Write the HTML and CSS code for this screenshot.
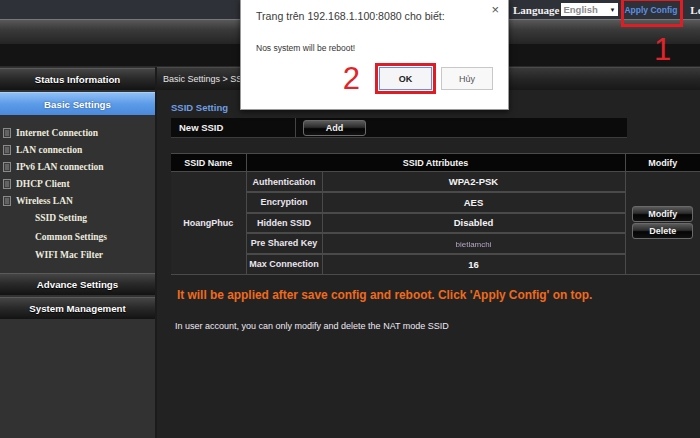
FILE: index.html
```html
<!DOCTYPE html>
<html>
<head>
<meta charset="utf-8">
<title>SSID Setting</title>
<link rel="stylesheet" href="styles.css">
</head>
<body>
<div class="page">
  <div class="topbar">
    <span class="lang-label">Language</span>
    <span class="lang-select"><span class="lang-value">English</span><span class="lang-arrow">▼</span></span>
    <a class="apply">Apply Config</a>
    <span class="logout">Logout</span>
  </div>
  <div class="banner">
    <div class="banner-top"></div>
    <div class="banner-bottom"></div>
  </div>
  <div class="main">
    <nav class="sidebar">
      <div class="nav-head first">Status Information</div>
      <div class="nav-head active">Basic Settings</div>
      <ul class="nav-list">
        <li class="nav-item"><svg class="doc" viewBox="0 0 8 10"><rect x="0.5" y="0.5" width="7" height="9" fill="#3c3c3c" stroke="#8a8a8a"/><path d="M2 3h4M2 5h4M2 7h4" stroke="#8a8a8a"/></svg>Internet Connection</li>
        <li class="nav-item"><svg class="doc" viewBox="0 0 8 10"><rect x="0.5" y="0.5" width="7" height="9" fill="#3c3c3c" stroke="#8a8a8a"/><path d="M2 3h4M2 5h4M2 7h4" stroke="#8a8a8a"/></svg>LAN connection</li>
        <li class="nav-item"><svg class="doc" viewBox="0 0 8 10"><rect x="0.5" y="0.5" width="7" height="9" fill="#3c3c3c" stroke="#8a8a8a"/><path d="M2 3h4M2 5h4M2 7h4" stroke="#8a8a8a"/></svg>IPv6 LAN connection</li>
        <li class="nav-item"><svg class="doc" viewBox="0 0 8 10"><rect x="0.5" y="0.5" width="7" height="9" fill="#3c3c3c" stroke="#8a8a8a"/><path d="M2 3h4M2 5h4M2 7h4" stroke="#8a8a8a"/></svg>DHCP Client</li>
        <li class="nav-item"><svg class="doc" viewBox="0 0 8 10"><rect x="0.5" y="0.5" width="7" height="9" fill="#3c3c3c" stroke="#8a8a8a"/><path d="M2 3h4M2 5h4M2 7h4" stroke="#8a8a8a"/></svg>Wireless LAN</li>
        <li class="nav-sub">SSID Setting</li>
        <li class="nav-sub">Common Settings</li>
        <li class="nav-sub">WIFI Mac Filter</li>
      </ul>
      <div class="nav-head">Advance Settings</div>
      <div class="nav-head">System Management</div>
    </nav>
    <section class="content">
      <div class="crumb">Basic Settings &gt; SSID Setting</div>
      <div class="panel">
        <h2 class="panel-title">SSID Setting</h2>
        <div class="new-row">
          <div class="new-label">New SSID</div>
          <div class="new-action"><button class="btn btn-add">Add</button></div>
        </div>
        <table class="ssid">
          <thead>
            <tr>
              <th class="c-name">SSID Name</th>
              <th colspan="2">SSID Attributes</th>
              <th class="c-mod">Modify</th>
            </tr>
          </thead>
          <tbody>
            <tr>
              <td class="c-name" rowspan="5">HoangPhuc</td>
              <td class="c-label">Authentication</td>
              <td class="c-val">WPA2-PSK</td>
              <td class="c-mod" rowspan="5">
                <div class="mod-btns">
                  <button class="btn">Modify</button>
                  <button class="btn">Delete</button>
                </div>
              </td>
            </tr>
            <tr><td class="c-label">Encryption</td><td class="c-val">AES</td></tr>
            <tr><td class="c-label">Hidden SSID</td><td class="c-val">Disabled</td></tr>
            <tr><td class="c-label">Pre Shared Key</td><td class="c-val"><span class="key">bietlamchi</span></td></tr>
            <tr><td class="c-label">Max Connection</td><td class="c-val">16</td></tr>
          </tbody>
        </table>
        <p class="warn">It will be applied after save config and reboot. Click 'Apply Config' on top.</p>
        <p class="note">In user account, you can only modify and delete the NAT mode SSID</p>
      </div>
    </section>
  </div>

  <div class="dialog">
    <div class="dlg-title">Trang trên 192.168.1.100:8080 cho biết:</div>
    <span class="dlg-close">×</span>
    <div class="dlg-msg">Nos system will be reboot!</div>
    <div class="dlg-actions">
      <span class="step step2">2</span>
      <span class="ok-frame"><button class="dlg-btn dlg-ok">OK</button></span>
      <button class="dlg-btn dlg-cancel">Hủy</button>
    </div>
  </div>

  <div class="apply-frame"></div>
  <span class="step step1">1</span>
</div>
</body>
</html>
```

FILE: styles.css
```css
* { box-sizing: border-box; }

html, body {
  margin: 0;
  padding: 0;
  background: #222222;
}

.page {
  position: relative;
  width: 700px;
  height: 438px;
  overflow: hidden;
  background: #222222;
  font-family: "Liberation Sans", Arial, sans-serif;
}

/* top bar */
.topbar {
  height: 19px;
  background: #2e3137;
  display: flex;
  align-items: center;
  padding-left: 513px;
  white-space: nowrap;
}
.topbar > * { flex: none; }
.lang-label {
  font-family: "Liberation Serif", "Times New Roman", serif;
  font-weight: bold;
  font-size: 11px;
  color: #f2f2f2;
}
.lang-select {
  margin-left: 2px;
  width: 57px;
  height: 13px;
  background: #ffffff;
  display: flex;
  align-items: center;
  justify-content: space-between;
  padding: 0 3px 0 2px;
  font-size: 9.5px;
  color: #8a8a8a;
  font-weight: bold;
}
.lang-arrow {
  font-size: 6px;
  color: #111;
}
.apply {
  margin-left: 6px;
  font-size: 8.5px;
  font-weight: bold;
  color: #5a8fe2;
}
.logout {
  margin-left: 13px;
  font-family: "Liberation Serif", "Times New Roman", serif;
  font-weight: bold;
  font-size: 11px;
  color: #f2f2f2;
}

/* banner */
.banner {
  height: 48px;
  display: flex;
  flex-direction: column;
}
.banner-top {
  height: 25px;
  border-top: 1px solid #777777;
  background: linear-gradient(#585858, #3a3a3a 40%, #242424);
}
.banner-bottom {
  flex: 1;
  background: #141414;
  border-bottom: 1px solid #2a2a2a;
}

/* main */
.main {
  display: flex;
  height: 371px;
}
.sidebar {
  width: 157px;
  background: #323232;
  border-right: 2px solid #1b1b1b;
  display: flex;
  flex-direction: column;
}
.nav-head {
  height: 22px;
  margin-top: 2px;
  display: flex;
  align-items: center;
  justify-content: center;
  font-size: 9.7px;
  font-weight: bold;
  color: #ffffff;
  border-top: 1px solid #5a5a5a;
  background: linear-gradient(#454545, #2a2a2a 45%, #131313);
  text-shadow: 0 1px 1px #000;
}
.nav-head.first { margin-top: 1px; }
.nav-head.active {
  height: 23px;
  border-top: 1px solid #a9d0fa;
  background: linear-gradient(#8ebff5, #5c9be8 50%, #4a89db);
  text-shadow: 0 0 2px #2a4f80;
}
.nav-list {
  list-style: none;
  margin: 0;
  padding: 9px 0 6px 0;
}
.nav-item, .nav-sub {
  font-family: "Liberation Serif", "Times New Roman", serif;
  font-weight: bold;
  font-size: 9.5px;
  color: #ecebdf;
  display: flex;
  align-items: center;
  white-space: nowrap;
}
.nav-item {
  height: 17px;
  padding-left: 3px;
}
.nav-sub {
  height: 18.5px;
  padding-left: 35px;
}
.doc {
  width: 8px;
  height: 10px;
  margin-right: 5px;
  flex: none;
}

/* content */
.content {
  flex: 1;
  display: flex;
  flex-direction: column;
}
.crumb {
  height: 23px;
  display: flex;
  align-items: center;
  padding-left: 6px;
  font-size: 9px;
  color: #e4e4e4;
  border-top: 1px solid #4a4a4a;
  background: linear-gradient(#393939, #252525 50%, #181818);
}
.panel {
  padding-left: 14px;
}
.panel-title {
  margin: 11px 0 0 0;
  height: 14px;
  line-height: 14px;
  font-size: 9.5px;
  font-weight: bold;
  color: #6f9ee4;
}
.new-row {
  margin-top: 3px;
  width: 456px;
  height: 20px;
  display: flex;
  background: #0b0b0b;
  border-bottom: 1px solid #3c3c3c;
}
.new-label {
  width: 125px;
  border-right: 1px solid #444;
  display: flex;
  align-items: center;
  padding-left: 8px;
  font-size: 9.5px;
  font-weight: bold;
  color: #f2f2f2;
}
.new-action {
  display: flex;
  align-items: center;
  padding-left: 7px;
}
.btn {
  font-family: "Liberation Sans", Arial, sans-serif;
  font-size: 9px;
  font-weight: bold;
  color: #f2f2f2;
  height: 16px;
  padding: 0;
  border: 1px solid #6a6a6a;
  border-radius: 3px;
  background: linear-gradient(#5a5a5a, #2c2c2c 45%, #050505 55%, #111);
  display: flex;
  align-items: center;
  justify-content: center;
}
.btn-add { width: 63px; }

/* table */
.ssid {
  margin-top: 15px;
  width: 529px;
  border-collapse: collapse;
  font-size: 9px;
  font-weight: bold;
  color: #ebe5ee;
}
.ssid th {
  height: 18px;
  background: #060606;
  color: #f4f4f4;
  font-size: 9px;
  border-top: 1px solid #4a4a4a;
  border-bottom: 1px solid #4a4a4a;
  border-left: 1px solid #4a4a4a;
  text-align: center;
  padding: 0;
}
.ssid th:first-child { border-left: none; }
.ssid td {
  height: 20.5px;
  padding: 0;
  text-align: center;
  background: #252525;
}
.ssid td.c-name {
  width: 75px;
  border-bottom: 1px solid #4a4a4a;
  font-size: 9px;
}
.ssid td.c-label {
  width: 76px;
  border-left: 1px solid #4a4a4a;
  border-right: 1px solid #4a4a4a;
  border-bottom: 2px solid #4a4a4a;
}
.ssid td.c-val {
  color: #f4f4f4;
  font-size: 9.5px;
  border-bottom: 2px solid #4a4a4a;
}
.ssid tr:last-child td.c-label,
.ssid tr:last-child td.c-val { border-bottom: 1px solid #4a4a4a; }
.ssid td.c-mod {
  width: 75px;
  border-left: 1px solid #4a4a4a;
  border-bottom: 1px solid #4a4a4a;
}
.mod-btns {
  display: flex;
  flex-direction: column;
  align-items: center;
  gap: 1px;
}
.mod-btns .btn { width: 61px; }
.key {
  font-size: 8px;
  font-weight: normal;
  color: #b4a6c6;
  filter: blur(0.5px);
}

.warn {
  margin: 13px 0 0 6px;
  height: 14px;
  line-height: 14px;
  font-size: 11.9px;
  font-weight: bold;
  color: #ef6a1c;
  white-space: nowrap;
}
.note {
  margin: 18px 0 0 4px;
  height: 12px;
  line-height: 12px;
  font-size: 9px;
  color: #eeeaf2;
}

/* dialog overlay */
.dialog {
  position: absolute;
  left: 240px;
  top: -1px;
  width: 269px;
  height: 111px;
  background: #ffffff;
  border: 1px solid #9a9a9a;
  box-shadow: 0 2px 6px rgba(0, 0, 0, 0.6);
  padding: 9px 0 0 15px;
}
.dlg-title {
  font-size: 10.6px;
  color: #3a3a3a;
  height: 14px;
  line-height: 14px;
}
.dlg-close {
  position: absolute;
  right: 9px;
  top: 2px;
  font-size: 13px;
  color: #555;
}
.dlg-msg {
  margin-top: 19px;
  font-size: 8.5px;
  color: #333;
  height: 12px;
  line-height: 12px;
}
.dlg-actions {
  margin-top: 9px;
  display: flex;
  align-items: center;
  justify-content: flex-end;
  padding-right: 15px;
}
.ok-frame {
  border: 3px solid #e01c24;
  padding: 1px;
  display: flex;
  margin-right: 5px;
}
.dlg-btn {
  font-family: "Liberation Sans", Arial, sans-serif;
  height: 23px;
  padding: 0;
  font-size: 9px;
  display: flex;
  align-items: center;
  justify-content: center;
}
.dlg-ok {
  width: 53px;
  border: 1px solid #6d8fd8;
  background: #f5f5f7;
  font-weight: bold;
  color: #222;
}
.dlg-cancel {
  width: 52px;
  border: 1px solid #c8c8c8;
  background: #f8f8f8;
  color: #555;
}
.step {
  font-family: "Liberation Sans", Arial, sans-serif;
  font-size: 31px;
  line-height: 28px;
  color: #e3232a;
}
.step2 {
  margin-right: 15px;
}
.apply-frame {
  position: absolute;
  left: 621px;
  top: -2px;
  width: 62px;
  height: 29px;
  border: 3px solid #e01c24;
}
.step1 {
  position: absolute;
  left: 654px;
  top: 36px;
}
```
